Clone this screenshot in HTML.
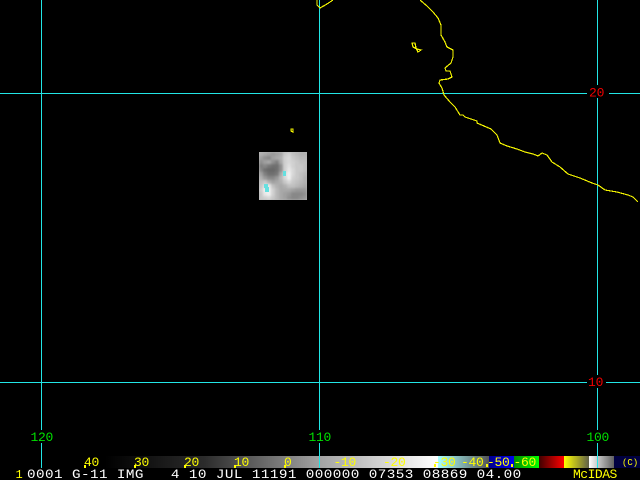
<!DOCTYPE html>
<html><head><meta charset="utf-8"><style>
html,body{margin:0;padding:0;background:#000;width:640px;height:480px;overflow:hidden}
svg{display:block}
text{font-family:"Liberation Mono",monospace;font-size:13px}
</style></head><body>
<svg width="640" height="480" viewBox="0 0 640 480" xmlns="http://www.w3.org/2000/svg">
<defs>
<linearGradient id="g1" x1="0" x2="1"><stop offset="0" stop-color="#000"/><stop offset=".3" stop-color="#2c2c2c"/><stop offset=".65" stop-color="#a4a4a4"/><stop offset="1" stop-color="#fff"/></linearGradient>
<linearGradient id="g2" x1="0" x2="1"><stop offset="0" stop-color="#a8ffff"/><stop offset="1" stop-color="#555"/></linearGradient>
<linearGradient id="g3" x1="0" x2="1"><stop offset="0" stop-color="#00008c"/><stop offset="1" stop-color="#0000f0"/></linearGradient>
<linearGradient id="g4" x1="0" x2="1"><stop offset="0" stop-color="#008c00"/><stop offset="1" stop-color="#00ff00"/></linearGradient>
<linearGradient id="g5" x1="0" x2="1"><stop offset="0" stop-color="#400000"/><stop offset="1" stop-color="#ff0000"/></linearGradient>
<linearGradient id="g6" x1="0" x2="1"><stop offset="0" stop-color="#ffff00"/><stop offset="1" stop-color="#606048"/></linearGradient>
<linearGradient id="g7" x1="0" x2="1"><stop offset="0" stop-color="#fff"/><stop offset="1" stop-color="#606060"/></linearGradient>
<clipPath id="c"><rect x="259" y="152" width="48" height="48"/></clipPath>
<filter id="b" x="-10%" y="-10%" width="120%" height="120%"><feGaussianBlur stdDeviation="1"/></filter>
</defs>
<rect width="640" height="480" fill="#000"/>

<!-- grid -->
<g fill="#22e6e6" shape-rendering="crispEdges">
<rect x="0" y="93" width="640" height="1"/>
<rect x="0" y="382" width="640" height="1"/>
<rect x="41" y="0" width="1" height="468"/>
<rect x="319" y="0" width="1" height="468"/>
<rect x="597" y="0" width="1" height="468"/>
</g>

<!-- coast -->
<g fill="none" stroke="#f2f200" stroke-width="1.2" shape-rendering="crispEdges">
<path d="M420 0L427 6L433 12L438 18L441 25L441 35L445 42L447 47L453 50L453 57L451 63L445 68L446 71L450 71L452 77L448 79L440 80L439 83L442 88L444 95L450 102L455 107L460 115L463 115L465 117L477 121L477 123L491 129L497 135L500 143L507 146L517 149L525 152L533 154L538 156L542 153L547 155L552 162L560 167L568 174L580 178L592 183L598 185L605 190L617 192L628 195L633 197L638 202"/>
<path d="M317 0L317 5L320 8L327 4L333 0"/>
<path d="M412 43L415 43L416 48L418 52L421 50L417 49L413 47Z"/>
<path d="M291 129L293 129L293 132L291 131Z"/>
</g>

<!-- satellite patch -->
<g clip-path="url(#c)">
<rect x="259" y="152" width="48" height="48" fill="#b8b8b8"/>
<g filter="url(#b)" shape-rendering="crispEdges">
<rect x="259" y="152" width="4" height="4" fill="#b0b0b0"/><rect x="263" y="152" width="4" height="4" fill="#a8a8a8"/><rect x="267" y="152" width="4" height="4" fill="#a0a0a0"/><rect x="271" y="152" width="4" height="4" fill="#989898"/><rect x="275" y="152" width="4" height="4" fill="#a0a0a0"/><rect x="279" y="152" width="4" height="4" fill="#a8a8a8"/><rect x="283" y="152" width="4" height="4" fill="#c8c8c8"/><rect x="287" y="152" width="4" height="4" fill="#d0d0d0"/><rect x="291" y="152" width="4" height="4" fill="#c0c0c0"/><rect x="295" y="152" width="4" height="4" fill="#b8b8b8"/><rect x="299" y="152" width="4" height="4" fill="#b0b0b0"/><rect x="303" y="152" width="4" height="4" fill="#b0b0b0"/>
<rect x="259" y="156" width="4" height="4" fill="#a0a0a0"/><rect x="263" y="156" width="4" height="4" fill="#909090"/><rect x="267" y="156" width="4" height="4" fill="#888"/><rect x="271" y="156" width="4" height="4" fill="#a0a0a0"/><rect x="275" y="156" width="4" height="4" fill="#a8a8a8"/><rect x="279" y="156" width="4" height="4" fill="#b0b0b0"/><rect x="283" y="156" width="4" height="4" fill="#d0d0d0"/><rect x="287" y="156" width="4" height="4" fill="#d8d8d8"/><rect x="291" y="156" width="4" height="4" fill="#c8c8c8"/><rect x="295" y="156" width="4" height="4" fill="#c0c0c0"/><rect x="299" y="156" width="4" height="4" fill="#b8b8b8"/><rect x="303" y="156" width="4" height="4" fill="#b8b8b8"/>
<rect x="259" y="160" width="4" height="4" fill="#909090"/><rect x="263" y="160" width="4" height="4" fill="#a0a0a0"/><rect x="267" y="160" width="4" height="4" fill="#a8a8a8"/><rect x="271" y="160" width="4" height="4" fill="#909090"/><rect x="275" y="160" width="4" height="4" fill="#808080"/><rect x="279" y="160" width="4" height="4" fill="#a8a8a8"/><rect x="283" y="160" width="4" height="4" fill="#d0d0d0"/><rect x="287" y="160" width="4" height="4" fill="#d8d8d8"/><rect x="291" y="160" width="4" height="4" fill="#d0d0d0"/><rect x="295" y="160" width="4" height="4" fill="#c8c8c8"/><rect x="299" y="160" width="4" height="4" fill="#c0c0c0"/><rect x="303" y="160" width="4" height="4" fill="#c0c0c0"/>
<rect x="259" y="164" width="4" height="4" fill="#808080"/><rect x="263" y="164" width="4" height="4" fill="#888"/><rect x="267" y="164" width="4" height="4" fill="#787878"/><rect x="271" y="164" width="4" height="4" fill="#707070"/><rect x="275" y="164" width="4" height="4" fill="#707070"/><rect x="279" y="164" width="4" height="4" fill="#909090"/><rect x="283" y="164" width="4" height="4" fill="#d0d0d0"/><rect x="287" y="164" width="4" height="4" fill="#e0e0e0"/><rect x="291" y="164" width="4" height="4" fill="#d0d0d0"/><rect x="295" y="164" width="4" height="4" fill="#c8c8c8"/><rect x="299" y="164" width="4" height="4" fill="#c8c8c8"/><rect x="303" y="164" width="4" height="4" fill="#c0c0c0"/>
<rect x="259" y="168" width="4" height="4" fill="#888"/><rect x="263" y="168" width="4" height="4" fill="#707070"/><rect x="267" y="168" width="4" height="4" fill="#686868"/><rect x="271" y="168" width="4" height="4" fill="#686868"/><rect x="275" y="168" width="4" height="4" fill="#707070"/><rect x="279" y="168" width="4" height="4" fill="#909090"/><rect x="283" y="168" width="4" height="4" fill="#d0d0d0"/><rect x="287" y="168" width="4" height="4" fill="#e8e8e8"/><rect x="291" y="168" width="4" height="4" fill="#d8d8d8"/><rect x="295" y="168" width="4" height="4" fill="#c8c8c8"/><rect x="299" y="168" width="4" height="4" fill="#c8c8c8"/><rect x="303" y="168" width="4" height="4" fill="#c0c0c0"/>
<rect x="259" y="172" width="4" height="4" fill="#a0a0a0"/><rect x="263" y="172" width="4" height="4" fill="#808080"/><rect x="267" y="172" width="4" height="4" fill="#707070"/><rect x="271" y="172" width="4" height="4" fill="#707070"/><rect x="275" y="172" width="4" height="4" fill="#787878"/><rect x="279" y="172" width="4" height="4" fill="#a8a8a8"/><rect x="283" y="172" width="4" height="4" fill="#e0e0e0"/><rect x="287" y="172" width="4" height="4" fill="#f0f0f0"/><rect x="291" y="172" width="4" height="4" fill="#d8d8d8"/><rect x="295" y="172" width="4" height="4" fill="#c8c8c8"/><rect x="299" y="172" width="4" height="4" fill="#c0c0c0"/><rect x="303" y="172" width="4" height="4" fill="#b8b8b8"/>
<rect x="259" y="176" width="4" height="4" fill="#b0b0b0"/><rect x="263" y="176" width="4" height="4" fill="#989898"/><rect x="267" y="176" width="4" height="4" fill="#888"/><rect x="271" y="176" width="4" height="4" fill="#888"/><rect x="275" y="176" width="4" height="4" fill="#989898"/><rect x="279" y="176" width="4" height="4" fill="#b8b8b8"/><rect x="283" y="176" width="4" height="4" fill="#d8d8d8"/><rect x="287" y="176" width="4" height="4" fill="#f0f0f0"/><rect x="291" y="176" width="4" height="4" fill="#d0d0d0"/><rect x="295" y="176" width="4" height="4" fill="#c8c8c8"/><rect x="299" y="176" width="4" height="4" fill="#c0c0c0"/><rect x="303" y="176" width="4" height="4" fill="#b0b0b0"/>
<rect x="259" y="180" width="4" height="4" fill="#c0c0c0"/><rect x="263" y="180" width="4" height="4" fill="#c8c8c8"/><rect x="267" y="180" width="4" height="4" fill="#b0b0b0"/><rect x="271" y="180" width="4" height="4" fill="#a0a0a0"/><rect x="275" y="180" width="4" height="4" fill="#a8a8a8"/><rect x="279" y="180" width="4" height="4" fill="#b0b0b0"/><rect x="283" y="180" width="4" height="4" fill="#c8c8c8"/><rect x="287" y="180" width="4" height="4" fill="#d8d8d8"/><rect x="291" y="180" width="4" height="4" fill="#c8c8c8"/><rect x="295" y="180" width="4" height="4" fill="#c0c0c0"/><rect x="299" y="180" width="4" height="4" fill="#b8b8b8"/><rect x="303" y="180" width="4" height="4" fill="#b0b0b0"/>
<rect x="259" y="184" width="4" height="4" fill="#c8c8c8"/><rect x="263" y="184" width="4" height="4" fill="#e0e0e0"/><rect x="267" y="184" width="4" height="4" fill="#e8e8e8"/><rect x="271" y="184" width="4" height="4" fill="#c0c0c0"/><rect x="275" y="184" width="4" height="4" fill="#b0b0b0"/><rect x="279" y="184" width="4" height="4" fill="#a8a8a8"/><rect x="283" y="184" width="4" height="4" fill="#b0b0b0"/><rect x="287" y="184" width="4" height="4" fill="#c0c0c0"/><rect x="291" y="184" width="4" height="4" fill="#c0c0c0"/><rect x="295" y="184" width="4" height="4" fill="#b8b8b8"/><rect x="299" y="184" width="4" height="4" fill="#b0b0b0"/><rect x="303" y="184" width="4" height="4" fill="#a8a8a8"/>
<rect x="259" y="188" width="4" height="4" fill="#d0d0d0"/><rect x="263" y="188" width="4" height="4" fill="#f0f0f0"/><rect x="267" y="188" width="4" height="4" fill="#f0f0f0"/><rect x="271" y="188" width="4" height="4" fill="#d0d0d0"/><rect x="275" y="188" width="4" height="4" fill="#b8b8b8"/><rect x="279" y="188" width="4" height="4" fill="#a8a8a8"/><rect x="283" y="188" width="4" height="4" fill="#a8a8a8"/><rect x="287" y="188" width="4" height="4" fill="#a8a8a8"/><rect x="291" y="188" width="4" height="4" fill="#a0a0a0"/><rect x="295" y="188" width="4" height="4" fill="#989898"/><rect x="299" y="188" width="4" height="4" fill="#989898"/><rect x="303" y="188" width="4" height="4" fill="#989898"/>
<rect x="259" y="192" width="4" height="4" fill="#c8c8c8"/><rect x="263" y="192" width="4" height="4" fill="#e8e8e8"/><rect x="267" y="192" width="4" height="4" fill="#f0f0f0"/><rect x="271" y="192" width="4" height="4" fill="#d0d0d0"/><rect x="275" y="192" width="4" height="4" fill="#b8b8b8"/><rect x="279" y="192" width="4" height="4" fill="#a8a8a8"/><rect x="283" y="192" width="4" height="4" fill="#a0a0a0"/><rect x="287" y="192" width="4" height="4" fill="#989898"/><rect x="291" y="192" width="4" height="4" fill="#888"/><rect x="295" y="192" width="4" height="4" fill="#888"/><rect x="299" y="192" width="4" height="4" fill="#888"/><rect x="303" y="192" width="4" height="4" fill="#909090"/>
<rect x="259" y="196" width="4" height="4" fill="#c8c8c8"/><rect x="263" y="196" width="4" height="4" fill="#d0d0d0"/><rect x="267" y="196" width="4" height="4" fill="#d8d8d8"/><rect x="271" y="196" width="4" height="4" fill="#c8c8c8"/><rect x="275" y="196" width="4" height="4" fill="#b8b8b8"/><rect x="279" y="196" width="4" height="4" fill="#a8a8a8"/><rect x="283" y="196" width="4" height="4" fill="#a0a0a0"/><rect x="287" y="196" width="4" height="4" fill="#909090"/><rect x="291" y="196" width="4" height="4" fill="#888"/><rect x="295" y="196" width="4" height="4" fill="#888"/><rect x="299" y="196" width="4" height="4" fill="#909090"/><rect x="303" y="196" width="4" height="4" fill="#989898"/>
</g>
<g fill="#66e0e0" shape-rendering="crispEdges">
<rect x="283" y="171" width="3" height="5"/>
<rect x="264" y="184" width="4" height="4"/>
<rect x="265" y="187" width="4" height="5"/>
</g>
</g>

<!-- label boxes -->
<g fill="#000" shape-rendering="crispEdges">
<rect x="587" y="85" width="22" height="13"/>
<rect x="587" y="375" width="19" height="13"/>
<rect x="29" y="430" width="25" height="13"/>
<rect x="307" y="430" width="25" height="13"/>
<rect x="585" y="430" width="25" height="13"/>
</g>

<!-- colour bar -->
<g shape-rendering="crispEdges">
<rect x="105" y="456" width="333" height="12" fill="url(#g1)"/>
<rect x="438" y="456" width="51" height="12" fill="url(#g2)"/>
<rect x="489" y="456" width="25" height="12" fill="url(#g3)"/>
<rect x="514" y="456" width="25" height="12" fill="url(#g4)"/>
<rect x="539" y="456" width="25" height="12" fill="url(#g5)"/>
<rect x="564" y="456" width="25" height="12" fill="url(#g6)"/>
<rect x="589" y="456" width="25" height="12" fill="url(#g7)"/>
<rect x="614" y="456" width="26" height="12" fill="#000040"/>
<rect x="597" y="456" width="1" height="12" fill="#22e6e6"/>
<rect x="41" y="456" width="1" height="12" fill="#22e6e6"/>
<rect x="319" y="456" width="1" height="12" fill="#22e6e6"/>
</g>

<!-- ticks -->
<g fill="#ffff00" shape-rendering="crispEdges">
<rect x="84" y="465" width="2" height="3"/><rect x="134" y="465" width="2" height="3"/><rect x="184" y="465" width="2" height="3"/><rect x="234" y="465" width="2" height="3"/><rect x="284" y="465" width="2" height="3"/><rect x="434" y="464" width="2" height="3"/><rect x="486" y="464" width="2" height="3"/><rect x="511" y="464" width="2" height="3"/>
</g>

<!-- labels -->
<g fill="#00e000">
<text x="30.5" y="441" letter-spacing="-.3">120</text>
<text x="308.5" y="441" letter-spacing="-.3">110</text>
<text x="586.5" y="441" letter-spacing="-.3">100</text>
</g>
<g fill="#f00000">
<text x="589" y="96.5" letter-spacing="-.2">20</text>
<text x="588" y="386" letter-spacing="-.2">10</text>
</g>
<g fill="#ffff00">
<text x="84" y="466" letter-spacing="-.3">40</text>
<text x="134" y="466" letter-spacing="-.3">30</text>
<text x="184" y="466" letter-spacing="-.3">20</text>
<text x="234" y="466" letter-spacing="-.3">10</text>
<text x="284" y="466">0</text>
<text x="333.5" y="466" letter-spacing="-.3">-10</text>
<text x="383" y="466" letter-spacing="-.3">-20</text>
<text x="433" y="466" letter-spacing="-.3">-30</text>
<text x="461" y="466" letter-spacing="-.3">-40</text>
<text x="487" y="466" letter-spacing="-.3">-50</text>
<text x="513.5" y="466" letter-spacing="-.3">-60</text>
<text x="622" y="465" style="font-size:9px">(C)</text>
<text x="15.5" y="478" style="font-size:12px">1</text>
<text x="573" y="478" letter-spacing="-.5">McIDAS</text>
</g>
<text transform="translate(27,478) scale(1.1,1)" fill="#fff" letter-spacing=".38" xml:space="preserve">0001 G-11 IMG   4 10 JUL 11191 000000 07353 08869 04.00</text>
</svg>
</body></html>
